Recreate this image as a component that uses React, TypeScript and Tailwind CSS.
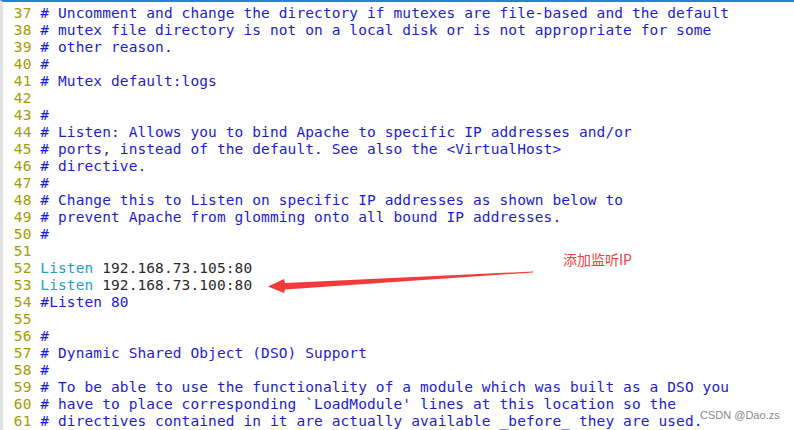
import React from "react";

type Seg = { t: string; c: "cm" | "kw" | "tx" };

const lines: { n: number; segs: Seg[] }[] = [
  { n: 37, segs: [{ t: "# Uncomment and change the directory if mutexes are file-based and the default", c: "cm" }] },
  { n: 38, segs: [{ t: "# mutex file directory is not on a local disk or is not appropriate for some", c: "cm" }] },
  { n: 39, segs: [{ t: "# other reason.", c: "cm" }] },
  { n: 40, segs: [{ t: "#", c: "cm" }] },
  { n: 41, segs: [{ t: "# Mutex default:logs", c: "cm" }] },
  { n: 42, segs: [] },
  { n: 43, segs: [{ t: "#", c: "cm" }] },
  { n: 44, segs: [{ t: "# Listen: Allows you to bind Apache to specific IP addresses and/or", c: "cm" }] },
  { n: 45, segs: [{ t: "# ports, instead of the default. See also the <VirtualHost>", c: "cm" }] },
  { n: 46, segs: [{ t: "# directive.", c: "cm" }] },
  { n: 47, segs: [{ t: "#", c: "cm" }] },
  { n: 48, segs: [{ t: "# Change this to Listen on specific IP addresses as shown below to", c: "cm" }] },
  { n: 49, segs: [{ t: "# prevent Apache from glomming onto all bound IP addresses.", c: "cm" }] },
  { n: 50, segs: [{ t: "#", c: "cm" }] },
  { n: 51, segs: [] },
  { n: 52, segs: [{ t: "Listen", c: "kw" }, { t: " 192.168.73.105:80", c: "tx" }] },
  { n: 53, segs: [{ t: "Listen", c: "kw" }, { t: " 192.168.73.100:80", c: "tx" }] },
  { n: 54, segs: [{ t: "#Listen 80", c: "cm" }] },
  { n: 55, segs: [] },
  { n: 56, segs: [{ t: "#", c: "cm" }] },
  { n: 57, segs: [{ t: "# Dynamic Shared Object (DSO) Support", c: "cm" }] },
  { n: 58, segs: [{ t: "#", c: "cm" }] },
  { n: 59, segs: [{ t: "# To be able to use the functionality of a module which was built as a DSO you", c: "cm" }] },
  { n: 60, segs: [{ t: "# have to place corresponding `LoadModule' lines at this location so the", c: "cm" }] },
  { n: 61, segs: [{ t: "# directives contained in it are actually available _before_ they are used.", c: "cm" }] },
];

const cls = {
  cm: "text-[#1c1cd2]",
  kw: "text-[#19a1c6]",
  tx: "text-[#2a2a2a]",
};

export default function App() {
  return (
    <div className="relative w-[794px] h-[430px] overflow-hidden bg-white border-t-2 border-t-[#2f7fd0] border-l-[3px] border-l-[#e2e2e2]">
      <div
        className="pt-[3px] pl-[2px] text-[14.5px] leading-[17px] tracking-[0.1px] whitespace-pre"
        style={{ fontFamily: '"DejaVu Sans Mono", monospace' }}
      >
        {lines.map((l) => (
          <div key={l.n} className="h-[17px]">
            <span className="text-[#a39c00]">{l.n.toString().padStart(3, " ") + " "}</span>
            {l.segs.map((s, i) => (
              <span key={i} className={cls[s.c]}>
                {s.t}
              </span>
            ))}
          </div>
        ))}
      </div>

      <svg className="absolute left-0 top-0" width="794" height="430" viewBox="0 0 794 430">
        <polygon points="530,269.5 282,281 281,277 265,284.5 281,291 282,287.5 530,270.5" fill="#f23a3a" />
      </svg>

      <div
        className="absolute left-[560px] top-[249px] text-[14px] leading-[17px] text-[#f24040]"
        style={{ fontFamily: '"Noto Sans CJK SC", "Noto Sans", sans-serif' }}
      >
        添加监听IP
      </div>

      <div
        className="absolute left-[697px] top-[406px] text-[11px] leading-[14px] text-[#8a8a8a]"
        style={{ fontFamily: '"Liberation Sans", Arial, sans-serif' }}
      >
        CSDN @Dao.zs
      </div>
    </div>
  );
}
